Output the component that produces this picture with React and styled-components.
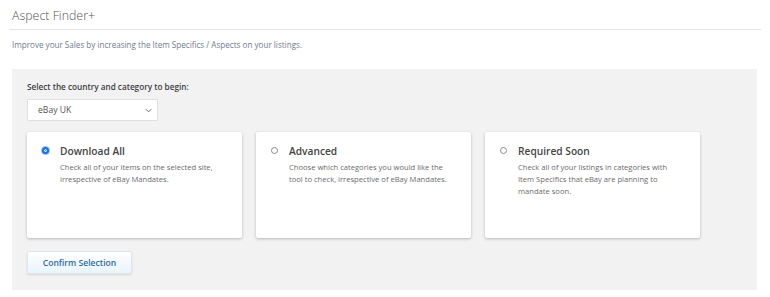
import React, { useState } from "react";
import styled, { createGlobalStyle } from "styled-components";

const GlobalStyle = createGlobalStyle`
  html, body {
    margin: 0;
    padding: 0;
    background: #ffffff;
    font-family: "Open Sans", "Liberation Sans", sans-serif;
  }
`;

const options = [
  {
    id: "all",
    title: "Download All",
    text: "Check all of your items on the selected site, irrespective of eBay Mandates.",
  },
  {
    id: "advanced",
    title: "Advanced",
    text: "Choose which categories you would like the tool to check, irrespective of eBay Mandates.",
  },
  {
    id: "soon",
    title: "Required Soon",
    text: "Check all of your listings in categories with Item Specifics that eBay are planning to mandate soon.",
  },
];

const App = () => {
  const [selected, setSelected] = useState("all");

  return (
    <Page>
      <GlobalStyle />
      <Header>
        <Title>Aspect Finder+</Title>
      </Header>
      <Intro>
        Improve your Sales by increasing the Item Specifics / Aspects on your
        listings.
      </Intro>
      <Panel>
        <Label>Select the country and category to begin:</Label>
        <SelectWrap>
          <Select defaultValue="uk">
            <option value="uk">eBay UK</option>
            <option value="us">eBay US</option>
            <option value="de">eBay DE</option>
          </Select>
          <Chevron viewBox="0 0 8 5" aria-hidden="true">
            <path d="M1 1l3 3 3-3" fill="none" stroke="#666" strokeWidth="1.1" />
          </Chevron>
        </SelectWrap>
        <Cards>
          {options.map((o) => (
            <Card key={o.id} onClick={() => setSelected(o.id)}>
              <Radio $checked={selected === o.id} />
              <CardBody>
                <CardTitle>{o.title}</CardTitle>
                <CardText>{o.text}</CardText>
              </CardBody>
            </Card>
          ))}
        </Cards>
        <ConfirmButton>Confirm Selection</ConfirmButton>
      </Panel>
    </Page>
  );
};

export default App;

const Page = styled.div`
  width: 770px;
  height: 297px;
  padding: 0 9px;
  box-sizing: border-box;
`;

const Header = styled.div`
  height: 28px;
  border-bottom: 1px solid #e4e4e4;
  display: flex;
  align-items: center;
  padding-left: 3px;
  padding-top: 1px;
`;

const Title = styled.h1`
  margin: 0;
  font-size: 12.4px;
  font-weight: 300;
  color: #555;
`;

const Intro = styled.p`
  margin: 9px 0 0 3px;
  font-size: 8.1px;
  line-height: 12px;
  color: #6f7d8c;
`;

const Panel = styled.div`
  margin: 18px 4px 0 3px;
  height: 221px;
  background: #f2f2f2;
  padding: 12px 16px 0 15px;
  box-sizing: border-box;
`;

const Label = styled.div`
  font-size: 8.2px;
  font-weight: 600;
  color: #3d3d3d;
  line-height: 12px;
`;

const SelectWrap = styled.div`
  position: relative;
  margin-top: 6px;
  width: 131px;
  height: 22px;
`;

const Select = styled.select`
  display: block;
  width: 100%;
  height: 100%;
  appearance: none;
  border: 1px solid #e0e0e0;
  border-radius: 1px;
  background: #ffffff;
  font-family: "Open Sans", "Liberation Sans", sans-serif;
  font-size: 8.6px;
  color: #555;
  padding: 0 6px 0 10px;
  outline: none;
`;

const Chevron = styled.svg`
  position: absolute;
  right: 6px;
  top: 9px;
  width: 7px;
  height: 5px;
  pointer-events: none;
`;

const Cards = styled.div`
  display: flex;
  gap: 14px;
  margin-top: 11px;
`;

const Card = styled.div`
  width: 215px;
  height: 106px;
  box-sizing: border-box;
  background: #ffffff;
  border-radius: 2px;
  box-shadow: 0 1px 3px rgba(0, 0, 0, 0.25);
  display: flex;
  align-items: flex-start;
  padding: 12px 12px 0 15px;
  cursor: pointer;
`;

const Radio = styled.span`
  flex: none;
  width: 7px;
  height: 7px;
  margin-top: 3px;
  border-radius: 50%;
  box-sizing: border-box;
  border: ${(p) => (p.$checked ? "2px solid #1a73e8" : "1px solid #8a8a8a")};
  background: ${(p) => (p.$checked ? "#1a73e8" : "#ffffff")};
  box-shadow: ${(p) =>
    p.$checked ? "inset 0 0 0 1px #ffffff, 0 0 0 1px #9cc2f5" : "none"};
`;

const CardBody = styled.div`
  margin-left: 11px;
`;

const CardTitle = styled.div`
  font-size: 10.2px;
  font-weight: 600;
  color: #444;
  line-height: 14px;
`;

const CardText = styled.div`
  margin-top: 3px;
  font-size: 7.6px;
  line-height: 12px;
  color: #6a6a6a;
  max-width: 165px;
`;

const ConfirmButton = styled.button`
  display: block;
  margin-top: 13px;
  width: 105px;
  height: 23px;
  border: 1px solid #e2e6ea;
  border-radius: 2px;
  background: linear-gradient(#ffffff, #e8f4fd);
  box-shadow: 0 1px 2px rgba(0, 0, 0, 0.12);
  font-family: "Open Sans", "Liberation Sans", sans-serif;
  font-size: 8.6px;
  font-weight: 600;
  color: #2f6a9e;
  cursor: pointer;
`;
